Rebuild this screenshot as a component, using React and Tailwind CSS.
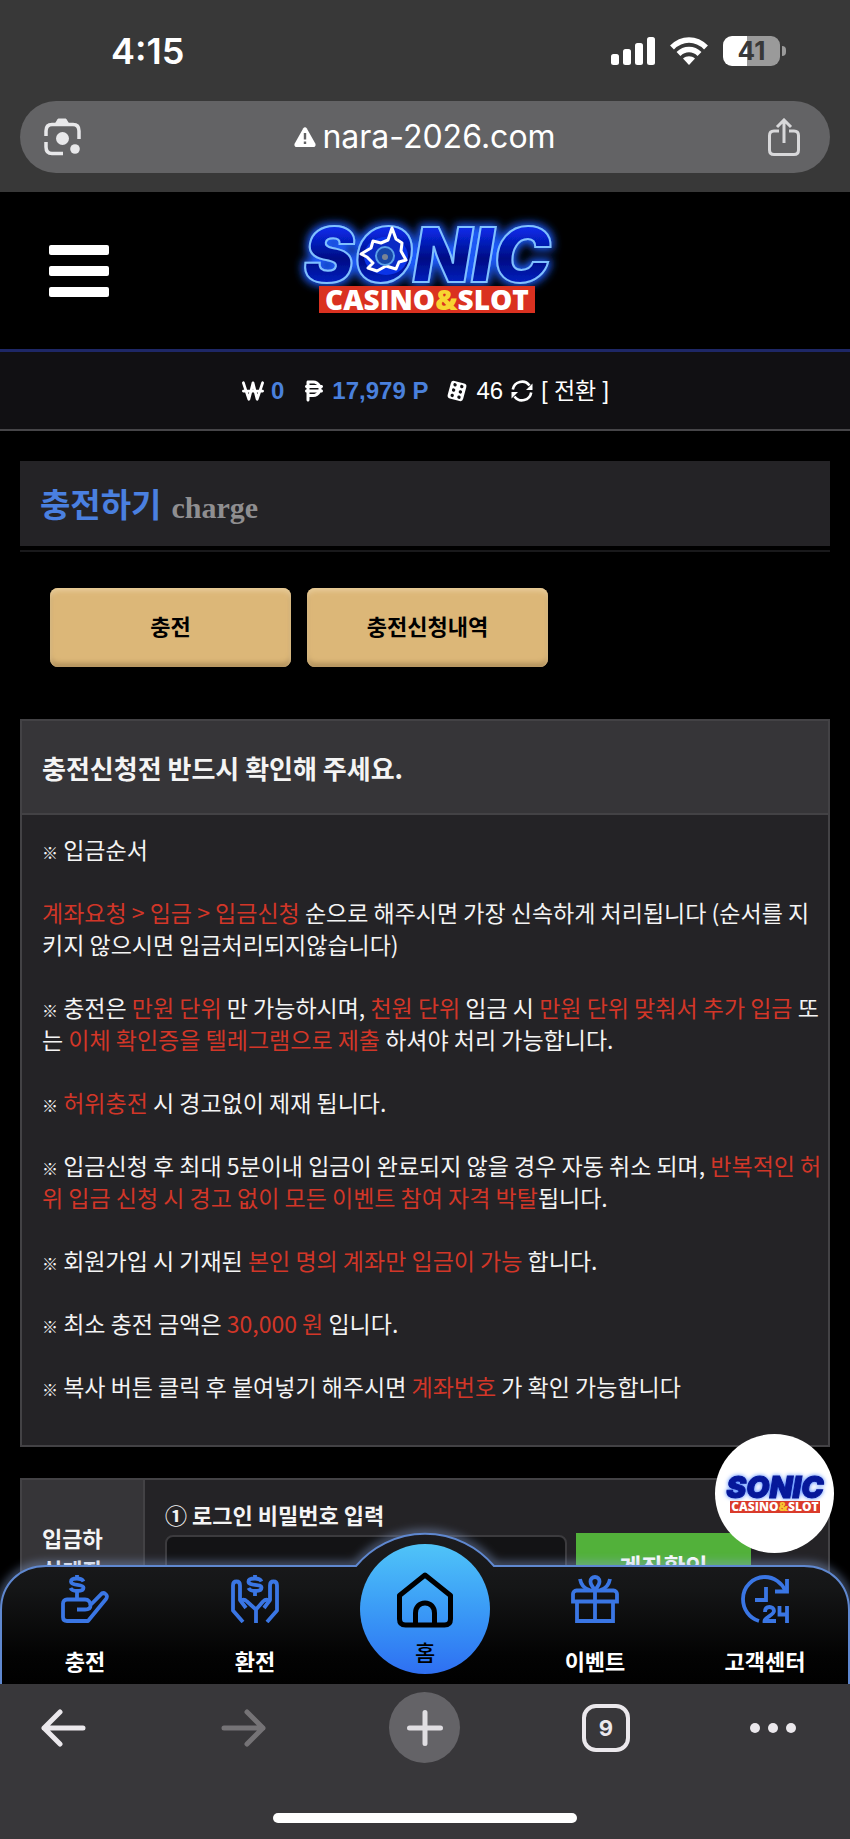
import React, { useState } from 'react';
import { FaWonSign, FaPesoSign } from 'react-icons/fa6';

let Logo = () => (
  <a href="#" aria-label="SONIC CASINO&SLOT" className="relative flex flex-col items-center">
    <svg viewBox="0 0 280 96" className="h-24 w-[280px] overflow-visible" role="img">
      <defs>
        <linearGradient id="sonicFill" x1="0" y1="0" x2="0" y2="1">
          <stop offset="0" stopColor="#0a3cf0" />
          <stop offset="0.25" stopColor="#0828e0" />
          <stop offset="0.55" stopColor="#020c84" />
          <stop offset="1" stopColor="#0a2ee8" />
        </linearGradient>
        <filter id="sonicGlow" x="-20%" y="-40%" width="140%" height="180%">
          <feMorphology in="SourceAlpha" operator="dilate" radius="2" result="fat" />
          <feGaussianBlur in="fat" stdDeviation="4" result="soft" />
          <feFlood floodColor="#1c5cff" />
          <feComposite in2="soft" operator="in" result="glow" />
          <feMerge>
            <feMergeNode in="glow" />
            <feMergeNode in="SourceGraphic" />
          </feMerge>
        </filter>
      </defs>
      <text x="142" y="59" textAnchor="middle" fontFamily="Inter, sans-serif" fontWeight="900" fontStyle="italic" fontSize="76" fill="url(#sonicFill)" stroke="#7fc0ff" strokeWidth="2" filter="url(#sonicGlow)">SONIC</text>
      {/* hedgehog head inside the O */}
      <ellipse cx="101" cy="33" rx="22" ry="19" fill="#0a34e8" />
      <path d="M76 31 L86 25 L88 18 L96 20 L103 17 L107 5 L111 16 L117 20 L116 28 L121 37 L114 39 L111 46 L101 43 L92 48 L83 45 L88 40 L82 34Z" fill="#0a2ac4" stroke="#fff" strokeWidth="3" strokeLinejoin="round" />
      <circle cx="100" cy="33" r="9" fill="#1646a8" stroke="#5aa0e8" strokeWidth="2" />
      <circle cx="100" cy="34" r="3" fill="#7a8494" />
      <rect x="34" y="63" width="216" height="27" fill="#da3120" />
      <text x="142" y="87" textAnchor="middle" fontFamily="'Open Sans', sans-serif" fontWeight="800" fontSize="28" fill="#fff">
        CASINO<tspan fill="#f7d531">&amp;</tspan>SLOT
      </text>
    </svg>
  </a>
);

let SmallLogo = () => (
  <svg viewBox="0 0 104 42" className="h-[42px] w-[104px] overflow-visible" aria-hidden="true">
    <text x="52" y="25" textAnchor="middle" fontFamily="Inter, sans-serif" fontWeight="900" fontStyle="italic" fontSize="30" fill="#06189a" stroke="#06189a" className="drop-shadow-[0_0_2px_#3f7cff]">SONIC</text>
    <rect x="7" y="28" width="90" height="12" fill="#da3b2b" />
    <text x="52" y="38" textAnchor="middle" fontFamily="'Open Sans', sans-serif" fontWeight="800" fontSize="12" fill="#fff">
      CASINO<tspan fill="#f7c531">&amp;</tspan>SLOT
    </text>
  </svg>
);

let DiceIcon = () => (
  <svg viewBox="0 0 22 22" className="h-[22px] w-[22px]">
    <g transform="rotate(15 11 11)">
      <rect x="3" y="2" width="16" height="18" rx="3" fill="#fff" />
      {[5.5, 11, 16.5].map((y) => (
        <g key={y} fill="#111013">
          <circle cx="7.5" cy={y} r="1.7" />
          <circle cx="14.5" cy={y} r="1.7" />
        </g>
      ))}
    </g>
  </svg>
);

let SyncIcon = () => (
  <svg viewBox="0 0 22 22" className="h-[22px] w-[22px]" fill="none" stroke="#fff" strokeWidth="2.6">
    <path d="M1.800 9.500A9.300 9.300 0 0 1 18.500 5.500" />
    <path d="M20.200 12.500A9.300 9.300 0 0 1 3.500 16.500" />
    <path d="M21.500 3.500V10H15z" fill="#fff" stroke="none" />
    <path d="M0.500 18.500V12H7z" fill="#fff" stroke="none" />
  </svg>
);

let iconProps = {
  viewBox: '0 0 48 48',
  className: 'h-12 w-12',
  fill: 'none',
  stroke: '#3a76e4',
  strokeWidth: 3.8,
};

let DepositIcon = () => (
  <svg {...iconProps} strokeLinejoin="round">
    <path d="M22.500 6.500c-1-2-3-3-6.500-3-4 0-6 1.200-6 3.200 0 4.600 12.500 1.600 12.500 6 0 2.300-2.500 3.300-6.500 3.300-3.500 0-5.500-1-6.500-3M16 0v4M16 16v7" />
    <path d="M16 34.500h8c3.500 0 5.500-1.500 5.500-4 0-3.500-2-6-5.500-6H6c-2.500 0-4 1.500-4 4v13.500c0 2.500 1.500 4 4 4h21l18-22c1.500-2 1-4-.5-5-1.500-1.200-3.500-1-5 .8L28.500 31" />
  </svg>
);

let WithdrawIcon = () => (
  <svg {...iconProps} strokeLinejoin="round">
    <path d="M30.500 6.500c-1-2-3.500-3-6.500-3-4 0-6.500 1.200-6.500 3.200 0 4.600 13 1.600 13 6 0 2.300-3 3.300-6.500 3.300-3.500 0-5.500-1-6.500-3M24 0v4M24 16v5" />
    <path d="M12 47L2 35.500V10.500c0-2.500 1.300-4 3.500-4S9 8 9 10.500V25l6 8" />
    <path d="M36 47l10-11.500V10.500c0-2.500-1.300-4-3.500-4S39 8 39 10.500V25l-6 8" />
    <path d="M9 26c3-2 5-1.500 7 .5l9 8V48M39 26c-3-2-5-1.500-7 .5l-7 8" />
  </svg>
);

let GiftIcon = () => (
  <svg {...iconProps}>
    <path d="M24 15.500V46M2 26.500V19c0-2 1.500-3.500 3.500-3.500h37c2 0 3.500 1.500 3.500 3.500v7.500zM6 27v19h36V27" />
    <path d="M24 15c-3-3.500-4.500-6-4.500-8.500C19.500 3.500 21.500 2 24 2s4.500 1.500 4.500 4.500C28.500 9 27 11.500 24 15z" />
    <path d="M9 4c1 5.500 4 9.500 9.500 11M39 4c-1 5.500-4 9.500-9.500 11" />
  </svg>
);

let SupportIcon = () => (
  <svg {...iconProps}>
    <path d="M18 46C8 43 2 34 2 24 2 11.500 12 2 24 2c9 0 17 6 20.500 14" />
    <path d="M46 4v12.500H34M25 12v13H14" />
    <path d="M24 37c0-3.500 2-5 4.500-5S33 33.500 33 36c0 4-9.500 6.500-9.500 10H35M38.500 31v8.500H46M46 31v17" />
  </svg>
);

let HomeIcon = () => (
  <svg viewBox="0 0 56 56" className="h-14 w-14" fill="none" stroke="#000" strokeWidth="5" strokeLinejoin="round">
    <path d="M2.500 23.500L28 3l25.500 20.500V47c0 4-2 6-6 6h-39c-4 0-6-2-6-6z" />
    <path d="M18.500 53V41c0-6 4-10 9.500-10s9.500 4 9.500 10v12" />
  </svg>
);

let menus = [
  { label: '충전', icon: <DepositIcon /> },
  { label: '환전', icon: <WithdrawIcon /> },
  { label: '홈', home: true },
  { label: '이벤트', icon: <GiftIcon /> },
  { label: '고객센터', icon: <SupportIcon /> },
];

let Red = ({ children }) => <span className="text-[#d23628]">{children}</span>;
let Mark = () => <span className="text-[16px] leading-none font-bold">※</span>;

function BrowserTop() {
  return (
    <header className="shrink-0 bg-[#383838] px-5 pb-[19px] text-white">
      <div className="flex h-[101px] items-center justify-between pr-11 pl-[91px]">
        <span className="text-[36px] font-semibold leading-none">4:15</span>
        <div className="flex items-center gap-[15px]">
          <svg viewBox="0 0 44 28" className="h-7 w-11" fill="#fff">
            <rect x="0" y="17" width="8" height="11" rx="2.500" />
            <rect x="12" y="12" width="8" height="16" rx="2.500" />
            <rect x="24" y="6" width="8" height="22" rx="2.500" />
            <rect x="36" y="0" width="8" height="28" rx="2.500" />
          </svg>
          <svg viewBox="0 0 38 28" className="h-7 w-[38px]" fill="none" stroke="#fff" strokeWidth="5.500">
            <path d="M2 10.500C12 .5 26 .5 36 10.500" />
            <path d="M8.500 17c6-6 15-6 21 0" />
            <path d="M19 28l-6-6.500c3.500-3 8.500-3 12 0z" fill="#fff" stroke="none" />
          </svg>
          <div className="flex items-center gap-[2px]">
            <span className="flex h-[30px] w-[57px] items-center justify-center rounded-[9px] bg-[linear-gradient(90deg,#fff_42%,#9a9a9a_42%)] text-[26px] font-bold leading-none text-[#383838]">41</span>
            <span className="h-[10px] w-1 rounded-r-full bg-[#9a9a9a]" />
          </div>
        </div>
      </div>
      <div className="flex h-[72px] items-center justify-between rounded-full bg-[#636365] pr-[30px] pl-6">
        <button aria-label="Lens">
          <svg viewBox="0 0 38 38" className="h-[38px] w-[38px]" fill="none" stroke="#e8e8ea" strokeWidth="3.500">
            <path d="M2 18v-5c0-4 2-6.500 6-6.500h21c4 0 6 2.500 6 6.500v8M2 24v5c0 4 2 6.500 6 6.500h11" />
            <path d="M10 7l3-5c.5-1 1-1.500 2-1.500h6c1 0 1.500.5 2 1.500l3 5z" fill="#e8e8ea" stroke="none" />
            <circle cx="18.500" cy="20.500" r="6.500" fill="#e8e8ea" stroke="none" />
            <circle cx="31" cy="31" r="4.800" fill="#e8e8ea" stroke="none" />
          </svg>
        </button>
        <a href="#" className="flex items-center gap-[6px] text-[32px] leading-none">
          <svg viewBox="0 0 22 20" className="h-5 w-[22px]">
            <path d="M9.300 1.200a2 2 0 0 1 3.400 0l8.600 15.300c.8 1.600-.2 3.500-2 3.500H2.700c-1.800 0-2.800-1.900-2-3.500z" fill="#fff" />
            <path d="M11 6v6.500M11 14.500v2.500" stroke="#636365" strokeWidth="2.400" />
          </svg>
          nara-2026.com
        </a>
        <button aria-label="Share">
          <svg viewBox="0 0 32 38" className="h-[38px] w-8" fill="none" stroke="#d8d8da" strokeWidth="3">
            <path d="M11 13H6c-3 0-4.500 1.500-4.500 4.500v14.500C1.500 35 3 36.500 6 36.500h20c3 0 4.500-1.500 4.500-4.500V17.500c0-3-1.500-4.500-4.500-4.500h-5" />
            <path d="M16 25V2.500M9 9l7-7 7 7" />
          </svg>
        </button>
      </div>
    </header>
  );
}

function BrowserBottom() {
  return (
    <footer className="flex h-[155px] shrink-0 flex-col items-center justify-between bg-[#38373a] pt-2 pb-4">
      <div className="grid w-full grid-cols-[154fr_181fr_181fr_181fr_154fr] items-center justify-items-center">
        <button aria-label="Back" className="ml-10 justify-self-start">
          <svg viewBox="0 0 46 38" className="h-[38px] w-[46px]" fill="none" stroke="#ebe8ec" strokeWidth="5" strokeLinecap="round" strokeLinejoin="round">
            <path d="M20 3L4 19l16 16M4 19h39" />
          </svg>
        </button>
        <button aria-label="Forward">
          <svg viewBox="0 0 46 38" className="h-[38px] w-[46px]" fill="none" stroke="#757376" strokeWidth="5" strokeLinecap="round" strokeLinejoin="round">
            <path d="M26 3l16 16-16 16M42 19H3" />
          </svg>
        </button>
        <button aria-label="New tab" className="flex h-[71px] w-[71px] items-center justify-center rounded-full bg-[#646367]">
          <svg viewBox="0 0 36 36" className="h-9 w-9" stroke="#e0dee2" strokeWidth="5" strokeLinecap="round">
            <path d="M18 2.500v31M2.500 18h31" />
          </svg>
        </button>
        <button className="flex h-12 w-12 items-center justify-center rounded-[14px] border-4 border-[#ebe8ec] text-[22px] font-bold leading-none text-[#ebe8ec]">9</button>
        <button aria-label="Menu" className="mr-[54px] flex gap-2 justify-self-end">
          <span className="h-[10px] w-[10px] rounded-full bg-[#ebe8ec]" />
          <span className="h-[10px] w-[10px] rounded-full bg-[#ebe8ec]" />
          <span className="h-[10px] w-[10px] rounded-full bg-[#ebe8ec]" />
        </button>
      </div>
      <div className="h-[10px] w-[304px] rounded-full bg-white" />
    </footer>
  );
}

function BottomNav() {
  return (
    <nav className="absolute inset-x-0 bottom-0 h-[150px]">
      <svg viewBox="0 0 850 150" preserveAspectRatio="none" className="absolute inset-0 h-full w-full overflow-visible">
        <defs>
          <linearGradient id="navFill" x1="0" y1="0" x2="0" y2="1">
            <stop offset="0" stopColor="#1c1c1f" />
            <stop offset="0.35" stopColor="#151617" />
            <stop offset="0.8" stopColor="#030303" />
            <stop offset="1" stopColor="#000" />
          </linearGradient>
          <filter id="navGlow" x="-5%" y="-30%" width="110%" height="160%">
            <feGaussianBlur stdDeviation="5" />
          </filter>
        </defs>
        <path d="M1 152V76C1 50 20 32 46 32H356A90 90 0 0 1 494 32H804C830 32 849 50 849 76V152" fill="none" stroke="#8aa4d8" strokeWidth="7" opacity="0.6" filter="url(#navGlow)" />
        <path d="M1 152V76C1 50 20 32 46 32H356A90 90 0 0 1 494 32H804C830 32 849 50 849 76V152" fill="url(#navFill)" stroke="#5f88d0" strokeWidth="2" />
      </svg>
      <ul className="relative grid h-full grid-cols-5 font-bold text-white">
        {menus.map((menu) => (
          <li key={menu.label} className="flex justify-center">
            {menu.home ? (
              <a href="#" className="mt-[10px] flex h-[130px] w-[130px] flex-col items-center rounded-full bg-linear-to-b from-[#50c4f8] to-[#2f6ff2] pt-7 text-[22px] text-black">
                <HomeIcon />
                <span className="pt-3 leading-none font-medium">{menu.label}</span>
              </a>
            ) : (
              <a href="#" className="flex flex-col items-center gap-[21px] pt-[41px] text-[22px] leading-8">
                {menu.icon}
                {menu.label}
              </a>
            )}
          </li>
        ))}
      </ul>
    </nav>
  );
}

export default function App() {
  let [password, setPassword] = useState('');

  return (
    <div className="flex h-screen flex-col overflow-hidden bg-black font-['Inter','Noto_Sans_CJK_KR',sans-serif]">
      <BrowserTop />

      <main className="relative min-h-0 flex-1 overflow-hidden bg-black font-['Noto_Sans_CJK_KR',sans-serif] text-[#f4f4f4]">
        <div className="grid h-[160px] grid-cols-[1fr_auto_1fr] items-center border-b-3 border-[#1e2766] px-[49px]">
          <button aria-label="메뉴" className="flex w-[60px] flex-col gap-[11px]">
            <span className="h-[10px] rounded-xs bg-white" />
            <span className="h-[10px] rounded-xs bg-white" />
            <span className="h-[10px] rounded-xs bg-white" />
          </button>
          <Logo />
        </div>

        <div className="flex h-[79px] items-center justify-center border-b-2 border-[#464548] bg-[#111013] font-['Liberation_Sans','Noto_Sans_CJK_KR',sans-serif] text-[24px] leading-8 text-white">
          <FaWonSign className="mr-[6px] h-[22px] w-6" />
          <b className="mr-5 text-[#4a80dc]">0</b>
          <FaPesoSign className="mr-2 h-6 w-5" />
          <b className="mr-[18px] text-[#4a80dc]">17,979 P</b>
          <DiceIcon />
          <span className="mx-2">46</span>
          <SyncIcon />
          <button className="ml-2 text-[23px]">[ 전환 ]</button>
        </div>

        <div className="px-5 pt-[30px]">
          <div className="border-b-2 border-[#19191b] pb-1">
            <h1 className="flex h-[85px] items-center gap-[10px] bg-[#242326] px-5 text-[33px] font-bold text-[#4a80e0]">
              충전하기
              <span className="pt-2 font-['Liberation_Serif',serif] text-[30px] text-[#8f8e90]">charge</span>
            </h1>
          </div>

          <div className="flex gap-4 px-[30px] pt-9 text-[22px] font-bold text-black">
            <button className="h-[79px] w-[241px] rounded-lg bg-[#dcb778] pb-1 shadow-[inset_0_3px_5px_#e8cc9a,inset_0_-4px_5px_#b0905c]">충전</button>
            <button className="h-[79px] w-[241px] rounded-lg bg-[#dcb778] pb-1 shadow-[inset_0_3px_5px_#e8cc9a,inset_0_-4px_5px_#b0905c]">충전신청내역</button>
          </div>

          <section className="mt-[52px] border-2 border-[#434245] bg-[#242326]">
            <h2 className="flex h-[94px] items-center border-b-2 border-[#434245] bg-[#363538] px-5 text-[26px] font-bold">
              충전신청전 반드시 확인해 주세요.
            </h2>
            <div className="flex flex-col gap-[31px] whitespace-nowrap px-5 pt-[18px] pb-[43px] text-[23px] leading-8">
              <p><Mark /> 입금순서</p>
              <p>
                <Red>계좌요청 &gt; 입금 &gt; 입금신청</Red> 순으로 해주시면 가장 신속하게 처리됩니다 (순서를 지<br />
                키지 않으시면 입금처리되지않습니다)
              </p>
              <p>
                <Mark /> 충전은 <Red>만원 단위</Red> 만 가능하시며, <Red>천원 단위</Red> 입금 시 <Red>만원 단위 맞춰서 추가 입금</Red> 또<br />
                는 <Red>이체 확인증을 텔레그램으로 제출</Red> 하셔야 처리 가능합니다.
              </p>
              <p><Mark /> <Red>허위충전</Red> 시 경고없이 제재 됩니다.</p>
              <p>
                <Mark /> 입금신청 후 최대 5분이내 입금이 완료되지 않을 경우 자동 취소 되며, <Red>반복적인 허<br />
                위 입금 신청 시 경고 없이 모든 이벤트 참여 자격 박탈</Red>됩니다.
              </p>
              <p><Mark /> 회원가입 시 기재된 <Red>본인 명의 계좌만 입금이 가능</Red> 합니다.</p>
              <p><Mark /> 최소 충전 금액은 <Red>30,000 원</Red> 입니다.</p>
              <p><Mark /> 복사 버튼 클릭 후 붙여넣기 해주시면 <Red>계좌번호</Red> 가 확인 가능합니다</p>
            </div>
          </section>

          <form className="mt-[31px] flex border-2 border-[#434245] bg-[#242326] text-[22px] font-bold leading-8" onSubmit={(e) => e.preventDefault()}>
            <div className="w-[123px] border-r-2 border-[#434245] bg-[#363538] px-5 pt-[41px] pb-10">
              입금하<br />실계좌
            </div>
            <div className="flex-1 px-5 pt-[18px]">
              <label htmlFor="password">① 로그인 비밀번호 입력</label>
              <div className="flex gap-[9px]">
                <input id="password" type="password" value={password} onChange={(e) => setPassword(e.target.value)} className="mt-[5px] h-[62px] w-[402px] rounded-lg border-2 border-[#3c3b3e] bg-[#131315] px-4" />
                <button className="mt-[3px] h-[66px] w-[175px] bg-[#52b13a] text-[24px] text-white">계좌확인</button>
              </div>
            </div>
          </form>
        </div>

        <BottomNav />

        <a href="#" aria-label="SONIC" className="absolute right-4 bottom-[131px] flex h-[119px] w-[119px] items-center justify-center rounded-full bg-white">
          <SmallLogo />
        </a>
      </main>

      <BrowserBottom />
    </div>
  );
}
